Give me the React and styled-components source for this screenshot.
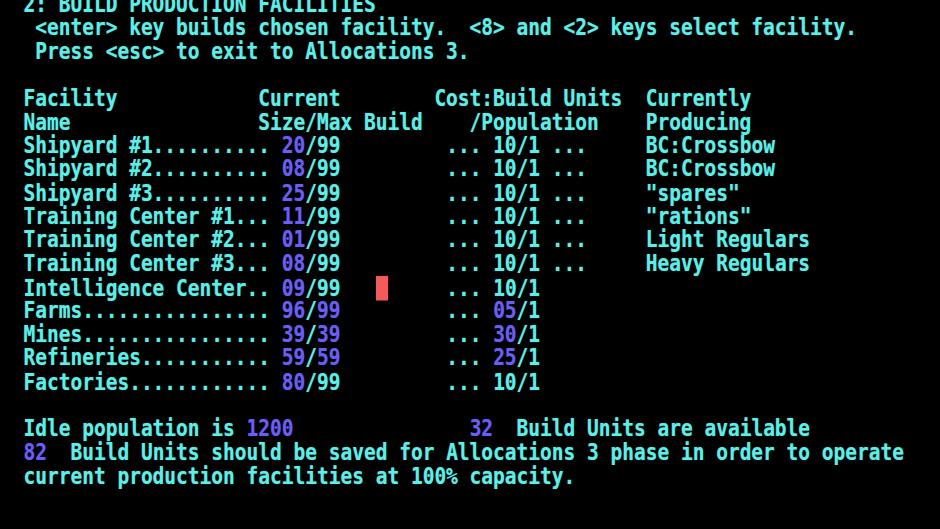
import React from "react";
import styled, { createGlobalStyle } from "styled-components";

const GlobalStyle = createGlobalStyle`
  html, body { margin: 0; padding: 0; background: #000; }
  #root { width: 940px; height: 529px; }
`;

const CYAN = "#5cefe8";
const BLUE = "#6a5ef4";
const RED = "#f45a5c";

const Screen = styled.div`
  width: 940px;
  height: 529px;
  overflow: hidden;
  background: #000;
`;

const TextPlane = styled.div`
  margin-top: -7.4px;
  transform: scaleY(1.16);
  transform-origin: top left;
  font-family: "DejaVu Sans Mono", "Liberation Mono", monospace;
  font-weight: bold;
  font-size: 19.517px;
  line-height: 20.345px;
  color: ${CYAN};
  text-shadow: 0 0 1px rgba(92, 239, 232, 0.5);
  white-space: pre;
`;

const Line = styled.div`
  height: 20.345px;
`;

const Num = styled.span`
  color: ${BLUE};
  text-shadow: 0 0 1px rgba(106, 94, 244, 0.5);
`;

const Cursor = styled.span`
  display: inline-block;
  width: 12.5px;
  height: 20.7px;
  margin-right: -0.75px;
  vertical-align: -3.8px;
  background: ${RED};
  box-shadow: 0 0 1px rgba(244, 90, 92, 0.6);
`;

const facilities = [
  { name: "Shipyard #1..........", size: "20", max: "99", maxHi: false, cost: "10", costHi: false, tail: " ...", prod: "BC:Crossbow" },
  { name: "Shipyard #2..........", size: "08", max: "99", maxHi: false, cost: "10", costHi: false, tail: " ...", prod: "BC:Crossbow" },
  { name: "Shipyard #3..........", size: "25", max: "99", maxHi: false, cost: "10", costHi: false, tail: " ...", prod: "\"spares\"" },
  { name: "Training Center #1...", size: "11", max: "99", maxHi: false, cost: "10", costHi: false, tail: " ...", prod: "\"rations\"" },
  { name: "Training Center #2...", size: "01", max: "99", maxHi: false, cost: "10", costHi: false, tail: " ...", prod: "Light Regulars" },
  { name: "Training Center #3...", size: "08", max: "99", maxHi: false, cost: "10", costHi: false, tail: " ...", prod: "Heavy Regulars" },
  { name: "Intelligence Center..", size: "09", max: "99", maxHi: false, cost: "10", costHi: false, tail: "", prod: "", cursor: true },
  { name: "Farms................", size: "96", max: "99", maxHi: true, cost: "05", costHi: true, tail: "", prod: "" },
  { name: "Mines................", size: "39", max: "39", maxHi: true, cost: "30", costHi: true, tail: "", prod: "" },
  { name: "Refineries...........", size: "59", max: "59", maxHi: true, cost: "25", costHi: true, tail: "", prod: "" },
  { name: "Factories............", size: "80", max: "99", maxHi: false, cost: "10", costHi: false, tail: "", prod: "" },
];

function FacilityRow({ f }) {
  const tailPad = f.tail ? f.tail.padEnd(9, " ") : "         ";
  return (
    <Line>
      {"  " + f.name + " "}
      <Num>{f.size}</Num>
      {"/"}
      {f.maxHi ? <Num>{f.max}</Num> : f.max}
      {f.cursor ? (
        <>
          {"   "}
          <Cursor />
          {"     "}
        </>
      ) : (
        "         "
      )}
      {"... "}
      {f.costHi ? <Num>{f.cost}</Num> : f.cost}
      {"/1"}
      {f.prod ? tailPad + f.prod : f.tail}
    </Line>
  );
}

export default function App() {
  return (
    <Screen>
      <GlobalStyle />
      <TextPlane>
        <Line>{"  2: BUILD PRODUCTION FACILITIES"}</Line>
        <Line>{"   <enter> key builds chosen facility.  <8> and <2> keys select facility."}</Line>
        <Line>{"   Press <esc> to exit to Allocations 3."}</Line>
        <Line>{" "}</Line>
        <Line>{"  Facility            Current        Cost:Build Units  Currently"}</Line>
        <Line>{"  Name                Size/Max Build    /Population    Producing"}</Line>
        {facilities.map((f) => (
          <FacilityRow key={f.name} f={f} />
        ))}
        <Line>{" "}</Line>
        <Line>
          {"  Idle population is "}
          <Num>1200</Num>
          {"               "}
          <Num>32</Num>
          {"  Build Units are available"}
        </Line>
        <Line>
          {"  "}
          <Num>82</Num>
          {"  Build Units should be saved for Allocations 3 phase in order to operate"}
        </Line>
        <Line>{"  current production facilities at 100% capacity."}</Line>
      </TextPlane>
    </Screen>
  );
}
